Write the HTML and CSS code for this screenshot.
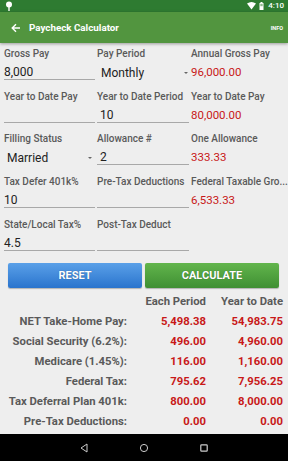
FILE: index.html
```html
<!DOCTYPE html>
<html>
<head>
<meta charset="utf-8">
<link rel="stylesheet" href="styles.css">
</head>
<body>
<div class="screen">
  <div class="statusbar">
    <svg class="pin" width="8" height="10" viewBox="0 0 8 10"><circle cx="4" cy="3.5" r="3" fill="#fff"/><rect x="3.3" y="5" width="1.4" height="5" fill="#fff"/></svg>
    <div class="status-right">
      <svg width="9" height="8" viewBox="0 0 9 8"><path d="M0 1.5 Q4.5 -1.5 9 1.5 L4.5 7.5 Z" fill="#fff"/></svg>
      <svg width="5" height="8" viewBox="0 0 5 8"><rect x="1.5" y="0" width="2" height="1" fill="#fff"/><rect x="0.5" y="1" width="4" height="7" fill="#fff"/><rect x="1.3" y="1.8" width="2.4" height="2.4" fill="#8fb98f"/></svg>
      <span class="time">4:10</span>
    </div>
  </div>
  <div class="appbar">
    <svg class="back" width="10" height="10" viewBox="0 0 10 10"><path d="M9 5 H1.5 M5 1.2 L1.2 5 L5 8.8" stroke="#fff" stroke-width="1.4" fill="none"/></svg>
    <span class="title">Paycheck Calculator</span>
    <span class="info">INFO</span>
  </div>
  <div class="content">
    <div class="form">
      <div class="field"><div class="label">Gross Pay</div><div class="value edit">8,000</div></div>
      <div class="field"><div class="label">Pay Period</div><div class="value spinner"><span>Monthly</span><span class="caret"></span></div></div>
      <div class="field"><div class="label">Annual Gross Pay</div><div class="value calc">96,000.00</div></div>

      <div class="field"><div class="label">Year to Date Pay</div><div class="value edit"></div></div>
      <div class="field"><div class="label">Year to Date Period</div><div class="value edit pad">10</div></div>
      <div class="field"><div class="label">Year to Date Pay</div><div class="value calc">80,000.00</div></div>

      <div class="field"><div class="label">Filling Status</div><div class="value spinner first"><span>Married</span><span class="caret"></span></div></div>
      <div class="field"><div class="label">Allowance #</div><div class="value edit pad">2</div></div>
      <div class="field"><div class="label">One Allowance</div><div class="value calc">333.33</div></div>

      <div class="field"><div class="label">Tax Defer 401k%</div><div class="value edit">10</div></div>
      <div class="field"><div class="label">Pre-Tax Deductions</div><div class="value edit"></div></div>
      <div class="field"><div class="label">Federal Taxable Gro...</div><div class="value calc">6,533.33</div></div>

      <div class="field"><div class="label">State/Local Tax%</div><div class="value edit">4.5</div></div>
      <div class="field"><div class="label">Post-Tax Deduct</div><div class="value edit"></div></div>
      <div class="field"></div>
    </div>
    <div class="buttons">
      <div class="btn reset">RESET</div>
      <div class="btn calculate">CALCULATE</div>
    </div>
    <div class="results">
      <div class="rl"></div><div class="rh">Each Period</div><div class="rh">Year to Date</div>
      <div class="rl">NET Take-Home Pay:</div><div class="rv">5,498.38</div><div class="rv">54,983.75</div>
      <div class="rl">Social Security (6.2%):</div><div class="rv">496.00</div><div class="rv">4,960.00</div>
      <div class="rl">Medicare (1.45%):</div><div class="rv">116.00</div><div class="rv">1,160.00</div>
      <div class="rl">Federal Tax:</div><div class="rv">795.62</div><div class="rv">7,956.25</div>
      <div class="rl">Tax Deferral Plan 401k:</div><div class="rv">800.00</div><div class="rv">8,000.00</div>
      <div class="rl">Pre-Tax Deductions:</div><div class="rv">0.00</div><div class="rv">0.00</div>
    </div>
  </div>
  <div class="navbar">
    <svg width="10" height="10" viewBox="0 0 10 10"><path d="M8 1 L2 5 L8 9 Z" stroke="#ccc" stroke-width="1" fill="none"/></svg>
    <svg width="10" height="10" viewBox="0 0 10 10"><circle cx="5" cy="5" r="3.6" stroke="#ccc" stroke-width="1" fill="none"/></svg>
    <svg width="10" height="10" viewBox="0 0 10 10"><rect x="1.8" y="1.8" width="6.4" height="6.4" rx="0.8" stroke="#ccc" stroke-width="1.2" fill="none"/></svg>
  </div>
</div>
</body>
</html>
```

FILE: styles.css
```css
* { box-sizing: border-box; }
html, body { margin: 0; padding: 0; }
body {
  font-family: Roboto, "Liberation Sans", sans-serif;
  background: #eeeeee;
}
.screen {
  width: 288px;
  height: 461px;
  display: flex;
  flex-direction: column;
  overflow: hidden;
  background: #eeeeee;
}
.statusbar {
  height: 12px;
  flex: none;
  background: #2e7b31;
  display: flex;
  align-items: center;
  justify-content: space-between;
  padding: 0 4px 0 5px;
}
.status-right {
  display: flex;
  align-items: center;
  gap: 3px;
}
.time {
  color: #fff;
  font-size: 8px;
  font-weight: 500;
  line-height: 12px;
  margin-left: 1px;
}
.appbar {
  height: 31px;
  flex: none;
  background: #52953f;
  display: flex;
  align-items: center;
  padding: 0 4px 0 11px;
  box-shadow: 0 1px 3px rgba(0,0,0,0.35);
  position: relative;
  z-index: 1;
}
.title {
  color: #fff;
  font-weight: 700;
  font-size: 9.8px;
  margin-left: 8px;
  flex: 1;
}
.info {
  color: #fff;
  font-weight: 700;
  font-size: 5.5px;
  margin-right: 1px;
}
.content {
  flex: 1;
  display: flex;
  flex-direction: column;
  padding-top: 3px;
}
.form {
  display: grid;
  grid-template-columns: 91px 92px 93px;
  column-gap: 2px;
  padding: 0 4px 0 4px;
}
.field {
  height: 42.7px;
  min-width: 0;
}
.label {
  height: 16px;
  line-height: 16px;
  font-size: 10px;
  font-weight: 500;
  color: #5a5a5a;
  white-space: nowrap;
}
.value {
  margin-top: 3px;
  height: 15px;
  line-height: 14px;
  font-size: 12px;
  color: #222;
  white-space: nowrap;
}
.edit {
  border-bottom: 1px solid #a8a8a8;
}
.edit.pad { padding-left: 3px; }
.calc {
  color: #c81818;
  font-size: 11.5px;
}
.spinner {
  display: flex;
  align-items: center;
  justify-content: space-between;
  padding-left: 4px;
  padding-right: 1px;
}
.spinner.first { padding-left: 3px; padding-right: 3px; }
.caret {
  width: 0;
  height: 0;
  border-left: 2px solid transparent;
  border-right: 2px solid transparent;
  border-top: 2.5px solid #666;
}
.buttons {
  display: flex;
  gap: 3px;
  padding: 4px 9px 0 8px;
}
.btn {
  flex: 1;
  height: 25px;
  border-radius: 2px;
  display: flex;
  align-items: center;
  justify-content: center;
  color: #fff;
  font-weight: 700;
  font-size: 11px;
  text-shadow: 0 0 1px rgba(0,0,0,0.4);
  box-shadow: 0 1px 1px rgba(0,0,0,0.25);
}
.reset {
  background: linear-gradient(#5aa0e8, #2a74cd);
}
.calculate {
  background: linear-gradient(#62b54c, #3f8f33);
}
.results {
  display: grid;
  grid-template-columns: 127px 79px 77px;
  grid-auto-rows: 20px;
  margin-top: 4px;
  font-size: 11.3px;
  font-weight: 700;
  line-height: 20px;
}
.rl, .rh, .rv {
  text-align: right;
  white-space: nowrap;
}
.rl, .rh { color: #5a5a5a; }
.rv { color: #c81818; }
.rh { font-weight: 700; }
.navbar {
  height: 27px;
  flex: none;
  background: #000;
  display: flex;
  align-items: center;
  justify-content: center;
  gap: 50px;
}
```
